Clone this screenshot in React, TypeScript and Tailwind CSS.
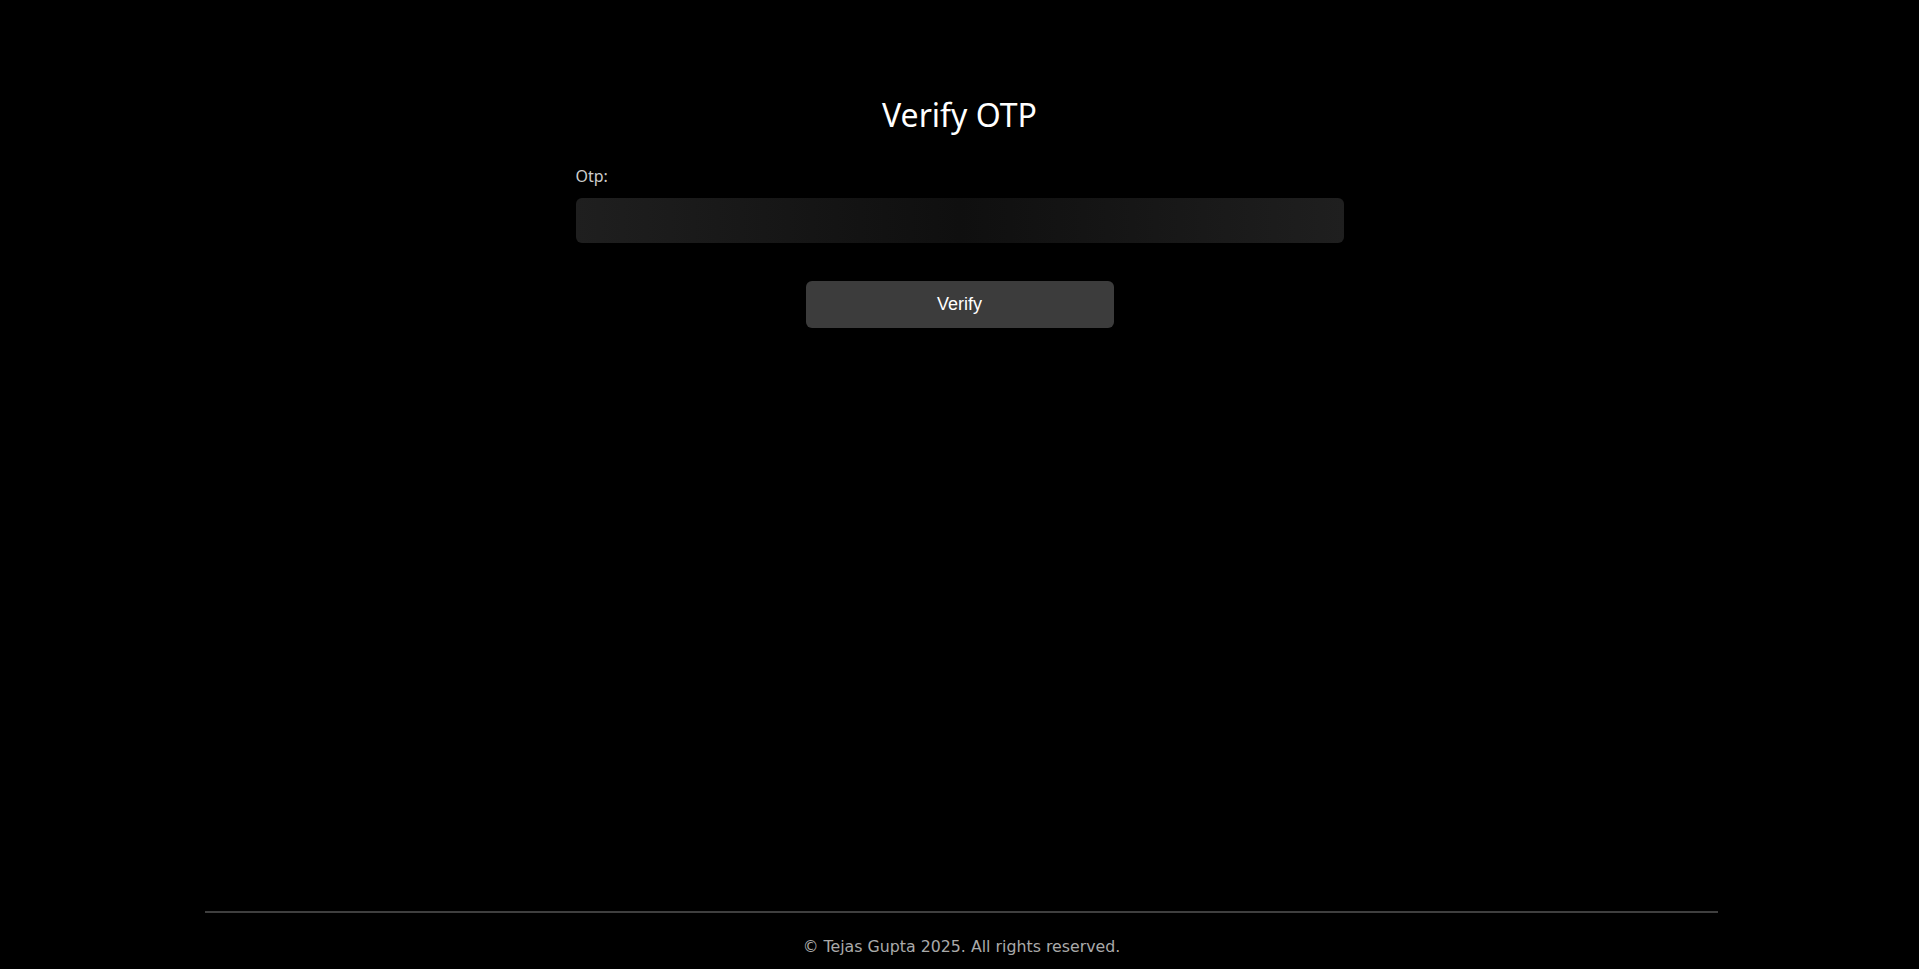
export default function App() {
  return (
    <div className="flex min-h-screen flex-col bg-black text-white">
      <main className="flex-1">
        <div className="mx-auto w-[768px] pt-[93px]">
          <h1 className="text-center font-['Noto_Sans',sans-serif] text-[32px] leading-[44px] font-normal text-white">
            Verify OTP
          </h1>

          <form className="mt-[28px]" onSubmit={(e) => e.preventDefault()}>
            <label
              htmlFor="otp"
              className="block font-['Noto_Sans',sans-serif] text-[16px] leading-[22px] text-[#cccccc]"
            >
              Otp:
            </label>
            <input
              id="otp"
              type="text"
              className="mt-[11px] block h-[45px] w-full rounded-md border-0 bg-linear-to-r from-[#1f1f1f] via-[#0f0f0f] to-[#1f1f1f] px-3 text-white outline-none"
            />

            <div className="mt-[38px] flex justify-center">
              <button
                type="submit"
                className="h-[47px] w-[308px] rounded-md bg-[#3c3c3c] font-['Liberation_Sans',Arial,sans-serif] text-[18px] text-white"
              >
                Verify
              </button>
            </div>
          </form>
        </div>
      </main>

      <footer className="ml-[205px] h-[58px] w-[1513px] border-t-2 border-[#3f3f3f] pt-[25px] text-center">
        <p className="font-['DejaVu_Sans',sans-serif] text-[15.8px] leading-[18px] text-[#aaaaaa]">
          © Tejas Gupta 2025. All rights reserved.
        </p>
      </footer>
    </div>
  );
}
